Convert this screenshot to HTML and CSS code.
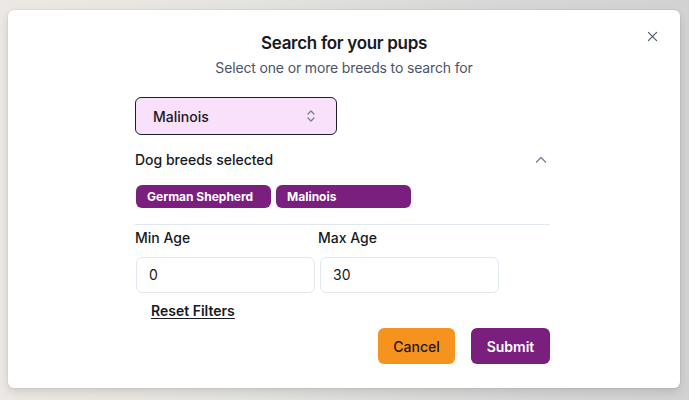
FILE: index.html
```html
<!DOCTYPE html>
<html>
<head>
<meta charset="utf-8">
<link rel="stylesheet" href="styles.css">
</head>
<body>
<div class="backdrop">
  <div class="modal">
    <button class="close" aria-label="Close">
      <svg width="11" height="11" viewBox="0 0 12 12"><path d="M1.5 1.5 L10.5 10.5 M10.5 1.5 L1.5 10.5" stroke="#4a5568" stroke-width="1.2" fill="none" stroke-linecap="round"/></svg>
    </button>
    <div class="header">
      <h2 class="title">Search for your pups</h2>
      <p class="subtitle">Select one or more breeds to search for</p>
    </div>
    <div class="content">
      <div class="select">
        <span>Malinois</span>
        <svg class="updown" width="12" height="16" viewBox="0 0 12 16"><path d="M3 6 L6 3 L9 6 M3 10 L6 13 L9 10" stroke="#718096" stroke-width="1.3" fill="none" stroke-linecap="round" stroke-linejoin="round"/></svg>
      </div>
      <div class="acc-head">
        <span>Dog breeds selected</span>
        <svg width="14" height="14" viewBox="0 0 14 14"><path d="M2.5 9 L7 4.5 L11.5 9" stroke="#718096" stroke-width="1.4" fill="none" stroke-linecap="round" stroke-linejoin="round"/></svg>
      </div>
      <div class="tags">
        <span class="tag">German Shepherd</span>
        <span class="tag">Malinois</span>
      </div>
      <div class="divider"></div>
      <div class="ages">
        <div class="field">
          <label>Min Age</label>
          <div class="input">0</div>
        </div>
        <div class="field">
          <label>Max Age</label>
          <div class="input">30</div>
        </div>
      </div>
      <a class="reset">Reset Filters</a>
      <div class="actions">
        <button class="btn cancel">Cancel</button>
        <button class="btn submit">Submit</button>
      </div>
    </div>
  </div>
</div>
</body>
</html>
```
FILE: styles.css
```css
* { box-sizing: border-box; }
html, body { margin: 0; padding: 0; }
body {
  width: 689px;
  height: 400px;
  overflow: hidden;
  font-family: Inter, "Liberation Sans", sans-serif;
  color: #171923;
}
.backdrop {
  width: 689px;
  height: 400px;
  padding: 10px 9px 12px 8px;
  background:
    linear-gradient(90deg, #ece8e3 0%, #e9e6e2 18%, #e3e3e0 35%, #dcdcda 55%, #d6d6d6 75%, #d2d2d2 100%);
}
.modal {
  position: relative;
  width: 672px;
  height: 378px;
  background: #ffffff;
  border-radius: 6px;
  box-shadow: 0 0 0 1px rgba(0,0,0,0.04), 0 4px 10px rgba(0,0,0,0.12);
  padding-top: 20px;
}
.close {
  position: absolute;
  top: 18px;
  right: 20px;
  width: 16px;
  height: 16px;
  padding: 0;
  border: 0;
  background: transparent;
  display: flex;
  align-items: center;
  justify-content: center;
}
.header { text-align: center; }
.title {
  margin: 0;
  font-size: 17px;
  line-height: 26px;
  font-weight: 600;
  color: #171923;
  letter-spacing: -0.3px;
}
.subtitle {
  margin: 2px 0 0;
  font-size: 14px;
  line-height: 20px;
  color: #4a5568;
  letter-spacing: -0.15px;
}
.content {
  margin-left: 127px;
  width: 415px;
  display: flex;
  flex-direction: column;
}
.select {
  margin-top: 19px;
  width: 202px;
  height: 38px;
  background: #f9e1fb;
  border: 1px solid #1a202c;
  border-radius: 6px;
  display: flex;
  align-items: center;
  justify-content: space-between;
  padding: 0 19px 0 17px;
  font-size: 14px;
  font-weight: 500;
}
.acc-head {
  margin-top: 13px;
  display: flex;
  align-items: center;
  justify-content: space-between;
  font-size: 14px;
  font-weight: 500;
  line-height: 24px;
  padding-right: 2px;
}
.tags {
  margin-top: 13px;
  display: flex;
  gap: 5px;
  padding-left: 1px;
}
.tag {
  width: 135px;
  height: 23px;
  background: #7b1f7e;
  color: #fff;
  border-radius: 6px;
  font-size: 12px;
  font-weight: 700;
  line-height: 23px;
  padding-left: 11px;
}
.divider {
  margin-top: 16px;
  height: 1px;
  background: #e2e8f0;
}
.ages {
  margin-top: 3px;
  display: flex;
  gap: 4px;
}
.field { display: flex; flex-direction: column; width: 180px; }
.field label {
  font-size: 14px;
  font-weight: 500;
  line-height: 20px;
}
.field + .field label { margin-left: -1px; }
.input {
  margin-top: 9px;
  margin-left: 1px;
  height: 36px;
  border: 1px solid #e2e8f0;
  border-radius: 6px;
  font-size: 14px;
  line-height: 34px;
  padding-left: 12px;
}
.reset {
  margin-top: 8px;
  align-self: flex-start;
  margin-left: 16px;
  font-size: 14px;
  font-weight: 600;
  line-height: 20px;
  text-decoration: underline;
  text-underline-offset: 2px;
  color: #171923;
}
.actions {
  margin-top: 7px;
  display: flex;
  justify-content: flex-end;
  gap: 16px;
}
.btn {
  height: 36px;
  border: 0;
  border-radius: 6px;
  font-family: inherit;
  font-size: 14px;
  font-weight: 600;
  padding: 0;
}
.cancel { width: 77px; background: #f6921e; color: #171923; font-weight: 500; }
.submit { width: 79px; background: #7b1f7e; color: #fff; }
```
